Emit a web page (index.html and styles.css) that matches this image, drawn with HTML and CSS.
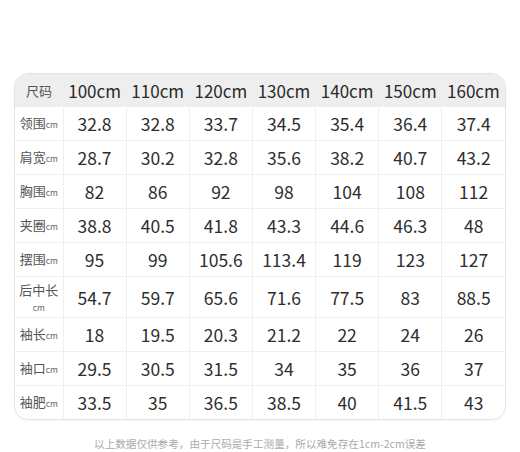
FILE: index.html
```html
<!DOCTYPE html>
<html lang="zh">
<head>
<meta charset="utf-8">
<link rel="stylesheet" href="styles.css">
</head>
<body>
<div class="page">
  <div class="card">
    <table class="size-table">
      <colgroup>
        <col class="c-label">
        <col><col><col><col><col><col><col>
      </colgroup>
      <thead>
        <tr>
          <th class="lab-head">尺码</th>
          <th>100cm</th><th>110cm</th><th>120cm</th><th>130cm</th><th>140cm</th><th>150cm</th><th>160cm</th>
        </tr>
      </thead>
      <tbody>
        <tr><td class="lab">领围<small>cm</small></td><td>32.8</td><td>32.8</td><td>33.7</td><td>34.5</td><td>35.4</td><td>36.4</td><td>37.4</td></tr>
        <tr><td class="lab">肩宽<small>cm</small></td><td>28.7</td><td>30.2</td><td>32.8</td><td>35.6</td><td>38.2</td><td>40.7</td><td>43.2</td></tr>
        <tr><td class="lab">胸围<small>cm</small></td><td>82</td><td>86</td><td>92</td><td>98</td><td>104</td><td>108</td><td>112</td></tr>
        <tr><td class="lab">夹圈<small>cm</small></td><td>38.8</td><td>40.5</td><td>41.8</td><td>43.3</td><td>44.6</td><td>46.3</td><td>48</td></tr>
        <tr><td class="lab">摆围<small>cm</small></td><td>95</td><td>99</td><td>105.6</td><td>113.4</td><td>119</td><td>123</td><td>127</td></tr>
        <tr class="tall"><td class="lab lab-wrap">后中长<small>cm</small></td><td>54.7</td><td>59.7</td><td>65.6</td><td>71.6</td><td>77.5</td><td>83</td><td>88.5</td></tr>
        <tr><td class="lab">袖长<small>cm</small></td><td>18</td><td>19.5</td><td>20.3</td><td>21.2</td><td>22</td><td>24</td><td>26</td></tr>
        <tr><td class="lab">袖口<small>cm</small></td><td>29.5</td><td>30.5</td><td>31.5</td><td>34</td><td>35</td><td>36</td><td>37</td></tr>
        <tr><td class="lab">袖肥<small>cm</small></td><td>33.5</td><td>35</td><td>36.5</td><td>38.5</td><td>40</td><td>41.5</td><td>43</td></tr>
      </tbody>
    </table>
  </div>
  <p class="note">以上数据仅供参考，由于尺码是手工测量，所以难免存在1cm-2cm误差</p>
</div>
</body>
</html>
```

FILE: styles.css
```css
html, body {
  margin: 0;
  padding: 0;
  background: #ffffff;
}

.page {
  padding: 73px 14px 0 14px;
  font-family: "Noto Sans CJK SC", "Noto Sans", sans-serif;
}

.card {
  width: 492px;
  box-sizing: border-box;
  border: 1px solid #e4e4e4;
  border-radius: 14px;
  overflow: hidden;
  box-shadow: 0 1px 2px rgba(0, 0, 0, 0.04);
}

.size-table {
  width: 100%;
  table-layout: fixed;
  border-collapse: collapse;
}

.c-label {
  width: 48px;
}

.size-table th,
.size-table td {
  text-align: center;
  vertical-align: middle;
  padding: 0;
  border-left: 1px solid #efefef;
  border-top: 1px solid #efefef;
}

.size-table tr > :first-child {
  border-left: none;
}

.size-table thead th {
  background: #eeeeee;
  height: 32px;
  font-size: 17px;
  font-weight: 400;
  color: #2a2a2a;
  border-top: none;
  border-left: none;
}

.size-table thead th.lab-head {
  font-size: 13px;
  font-weight: 400;
  color: #555555;
}

.size-table td {
  height: 33px;
  font-size: 17.5px;
  color: #2e2e2e;
}

.size-table tr.tall td {
  height: 40px;
}

.size-table td.lab {
  font-size: 13px;
  color: #555555;
  line-height: 20px;
  white-space: nowrap;
}

.size-table td.lab small {
  font-size: 8.5px;
  color: #666666;
}

.size-table td.lab-wrap {
  white-space: normal;
  line-height: 20px;
}

.size-table td.lab-wrap small {
  display: block;
  line-height: 14px;
}

.note {
  margin: 16px 0 0 0;
  text-align: center;
  font-size: 10.6px;
  line-height: 16px;
  color: #aaaaaa;
}
```
